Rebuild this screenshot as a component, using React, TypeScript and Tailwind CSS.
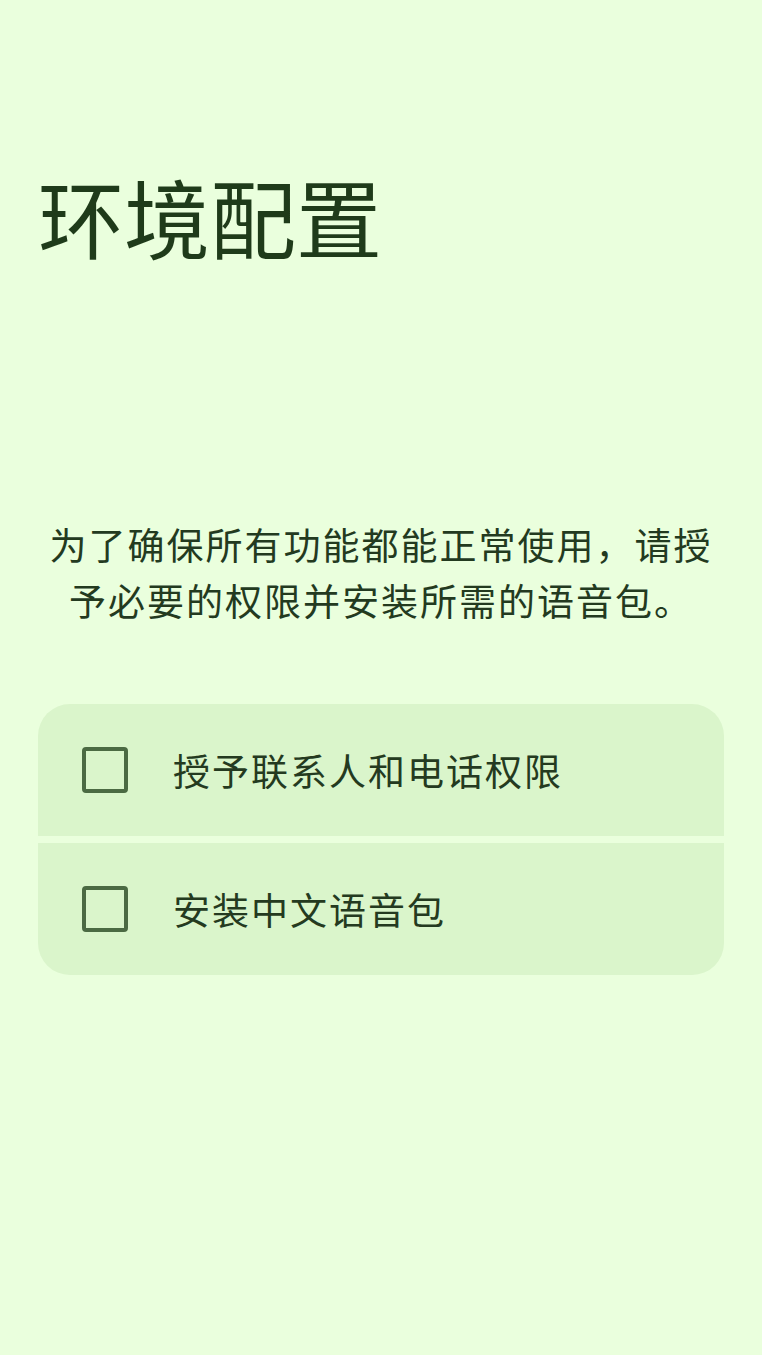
const font = "font-['Noto_Sans_CJK_SC','Noto_Sans',sans-serif]";

function CheckRow({ label }: { label: string }) {
  return (
    <div className="flex h-[132px] items-center bg-[#daf5cb] px-[44px]">
      <div className="h-[46px] w-[46px] rounded-[4px] border-[4px] border-[#4b6a43]" />
      <span className="ml-[45px] text-[37px] leading-none tracking-[2px] text-[#243a20]">
        {label}
      </span>
    </div>
  );
}

export default function App() {
  return (
    <div className={`min-h-[1355px] w-full bg-[#eaffdd] ${font}`}>
      <div className="px-[38px] pt-[173px]">
        <h1 className="text-[86px] leading-none font-normal text-[#1f3b1a]">
          环境配置
        </h1>
      </div>

      <p className="mt-[257px] px-[44px] text-center text-[37px] leading-[56px] tracking-[2px] text-[#233a1f]">
        为了确保所有功能都能正常使用，请授予必要的权限并安装所需的语音包。
      </p>

      <div className="mx-[38px] mt-[76px] flex flex-col gap-[7px] overflow-hidden rounded-[32px]">
        <CheckRow label="授予联系人和电话权限" />
        <CheckRow label="安装中文语音包" />
      </div>
    </div>
  );
}
